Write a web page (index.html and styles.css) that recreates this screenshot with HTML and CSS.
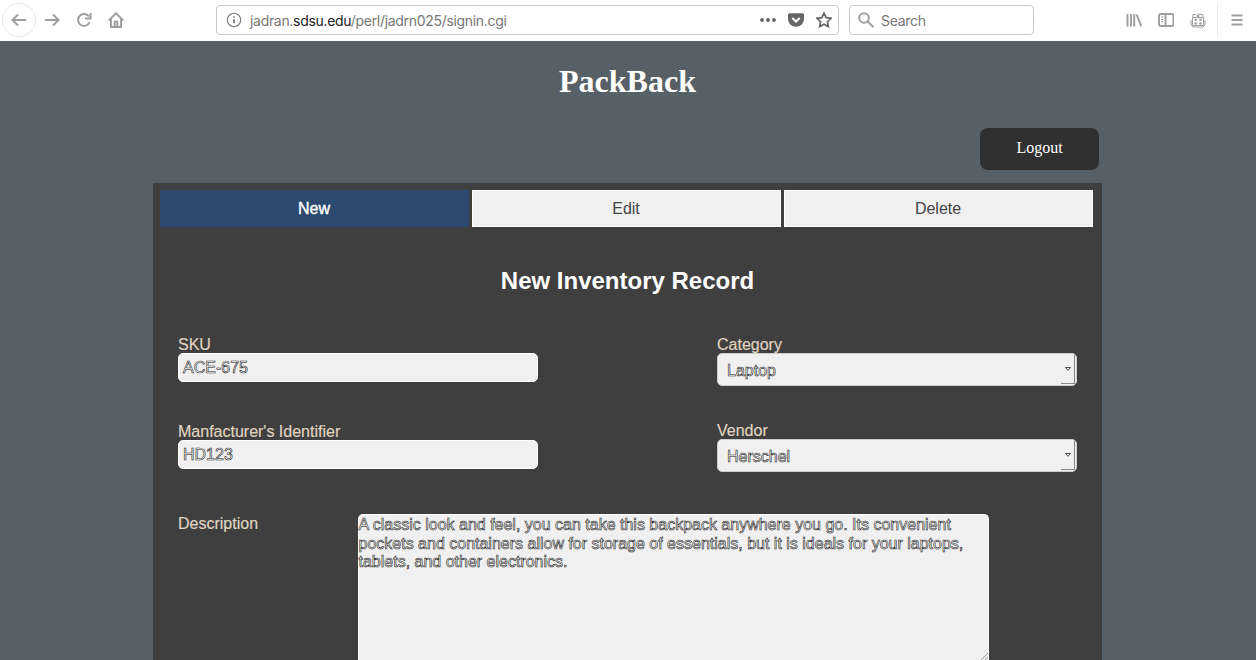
FILE: index.html
```html
<!DOCTYPE html>
<html lang="en">
<head>
<meta charset="utf-8">
<title>PackBack</title>
<link rel="stylesheet" href="styles.css">
</head>
<body>
<header class="toolbar">
  <nav class="nav">
    <span class="back"><svg class="icon" viewBox="0 0 16 16"><path d="M15 8H1.5M7 2.5 1.5 8 7 13.5"/></svg></span>
    <svg class="icon" viewBox="0 0 16 16"><path d="M1 8h13.500M9 2.500 14.500 8 9 13.500"/></svg>
    <svg class="icon" viewBox="0 0 16 16"><path d="M13 4.500A6 6 0 1 0 13.700 10"/><path d="M14.500 1v5.500H9"/></svg>
    <svg class="icon" viewBox="0 0 16 16"><path d="M.8 8.500 8 1.300l7.200 7.200M3 7.500V15h10V7.500"/><path d="M6.700 14.500V9.800h2.600v4.700"/></svg>
  </nav>
  <div class="address">
    <svg class="info" viewBox="0 0 16 16"><circle cx="8" cy="8" r="6.700"/><path class="thick" d="M8 7.300v4M8 4.200v1.600"/></svg>
    <span class="url">jadran.<span class="host">sdsu.edu</span>/perl/jadrn025/signin.cgi</span>
    <div class="actions">
      <svg class="icon dark" viewBox="0 0 16 16"><g class="solid"><circle cx="2" cy="8" r="1.900"/><circle cx="8" cy="8" r="1.900"/><circle cx="14" cy="8" r="1.900"/></g></svg>
      <svg class="icon dark" viewBox="0 0 16 16"><path class="solid" d="M1.500 1.300h13q1.500 0 1.500 1.500V7a8 7.700 0 0 1-16 0V2.800q0-1.500 1.500-1.500z"/><path class="tick" d="m4.300 6 3.700 3.500L11.700 6"/></svg>
      <svg class="icon dark" viewBox="0 0 16 16"><path d="m8 1.200 2.100 4.500 4.900.6-3.600 3.400.9 4.900L8 12.200l-4.300 2.400.9-4.900L1 6.300l4.900-.6z"/></svg>
    </div>
  </div>
  <div class="search">
    <svg class="icon" viewBox="0 0 16 16"><circle cx="6" cy="6" r="4.800"/><path d="m9.600 9.600 6 5.600"/></svg>
    <span>Search</span>
  </div>
  <div class="tools">
    <svg class="icon" viewBox="0 0 16 16"><path d="M1.500 2v12.500M5 2v12.500M8.200 2v12.500M10.700 2.500l4.600 12"/></svg>
    <svg class="icon" viewBox="0 0 16 16"><rect x="1" y="2" width="14.500" height="12" rx="2"/><path d="M7.500 2v12"/><path class="fine" d="M3 5h2.500M3 7.500h2.500M3 9.800h2"/></svg>
    <svg class="icon" viewBox="0 0 16 16"><path class="fine" d="M3 5V2.500h3M8 2l5 .5v3M2.500 5.500h11v8h-11zM1 8v5l2 2h10l2-2V8"/><g class="solid"><circle cx="5.700" cy="7.800" r="1.300"/><circle cx="10.500" cy="7.800" r="1.300"/><circle cx="5.700" cy="11.500" r="1.300"/><circle cx="10.500" cy="11.500" r="1.300"/><circle cx="8" cy="4" r="1.400"/></g></svg>
    <span class="divider"></span>
    <svg class="icon" viewBox="0 0 16 16"><path d="M2.500 3.500h11M2.500 8h11M2.500 12.500h11"/></svg>
  </div>
</header>
<main class="page">
  <h1 class="brand">PackBack</h1>
  <div class="session"><a class="logout">Logout</a></div>
  <section class="panel">
    <div class="tabs">
      <div class="tab active">New</div>
      <div class="tab">Edit</div>
      <div class="tab">Delete</div>
    </div>
    <h2 class="title">New Inventory Record</h2>
    <div class="columns">
      <div class="column left">
        <div class="field"><span class="label">SKU</span><div class="input">ACE-675</div></div>
        <div class="field"><span class="label">Manfacturer's Identifier</span><div class="input">HD123</div></div>
      </div>
      <div class="column right">
        <div class="field"><span class="label">Category</span><div class="select"><span>Laptop</span><span class="arrow"><svg viewBox="0 0 6 4"><path d="M.5.500h5L3 3.300z"/></svg></span></div></div>
        <div class="field"><span class="label">Vendor</span><div class="select"><span>Herschel</span><span class="arrow"><svg viewBox="0 0 6 4"><path d="M.5.500h5L3 3.300z"/></svg></span></div></div>
      </div>
    </div>
    <div class="description">
      <span class="label">Description</span>
      <div class="textarea">A classic look and feel, you can take this backpack anywhere you go. Its convenient<br>pockets and containers allow for storage of essentials, but it is ideals for your laptops,<br>tablets, and other electronics.<svg class="grip" viewBox="0 0 8 8"><path d="M0 8 8 0M4 8l4-4"/></svg></div>
    </div>
  </section>
</main>
</body>
</html>
```
FILE: styles.css
```css
* { box-sizing: border-box; }
body {
  margin: 0;
  height: 660px;
  overflow: hidden;
  display: flex;
  flex-direction: column;
  background: #576066;
  font: 16px/18px "Liberation Sans", Arial, sans-serif;
}

/* Browser toolbar */
.toolbar {
  flex: none;
  height: 41px;
  display: flex;
  align-items: center;
  padding: 0 4px 1px 2px;
  background: #fff;
  color: #777;
  font: 14px/20px Inter, sans-serif;
}
.icon { width: 16px; height: 16px; flex: none; }
.toolbar svg { fill: none; stroke: #a0a0a0; stroke-width: 2; }
.toolbar .fine { stroke-width: 1; }
.toolbar .solid { fill: #a0a0a0; stroke: none; }
.toolbar .dark { stroke: #666; stroke-width: 1.7; }
.toolbar .dark .solid { fill: #666; }
.toolbar .tick { stroke: #fff; stroke-width: 2; }
.nav { display: flex; align-items: center; gap: 16px; width: 214px; }
.back {
  width: 34px; height: 34px;
  margin-right: -8px;
  border: 1px solid #e6e6e6;
  border-radius: 50%;
  display: grid;
  place-items: center;
}
.address, .search {
  height: 30px;
  display: flex;
  align-items: center;
  border: 1px solid #c8c8c8;
  border-radius: 4px;
}
.address { width: 623px; padding: 0 6px 0 9px; }
.toolbar .info { width: 16px; height: 16px; stroke: #777; stroke-width: 1.1; }
.toolbar .thick { stroke-width: 1.700; }
.url { margin-left: 8px; padding-top: 1px; letter-spacing: -.31px; white-space: nowrap; }
.host { color: #222; }
.actions { display: flex; gap: 12px; margin-left: auto; }
.search { width: 185px; margin-left: 10px; padding-left: 8px; gap: 7px; }
.search span { padding-top: 1px; letter-spacing: -.3px; }
.tools { display: flex; align-items: center; gap: 16px; margin-left: auto; margin-right: 7px; }
.divider { width: 1px; height: 34px; margin: 0 -5px 0 -5px; background: #e8e8e8; }

/* Page */
.page {
  flex: 1;
  min-height: 0;
  width: 949px;
  margin: 0 0 0 153px;
  display: flex;
  flex-direction: column;
}
.brand {
  margin: 22px 0 0;
  font: bold 32px/37px "Liberation Serif", "Times New Roman", serif;
  text-align: center;
  color: #fff;
}
.session { display: flex; justify-content: flex-end; padding: 28px 3px 13px; }
.logout {
  width: 119px;
  height: 42px;
  border-radius: 8px;
  background: #303030;
  color: #fff;
  font: 16px/40px "Liberation Serif", "Times New Roman", serif;
  text-align: center;
}
.panel { flex: 1; background: #3f3f3f; padding: 7px 9.500px 0 6.500px; }
.tabs { display: grid; grid-template-columns: repeat(3, 1fr); gap: 3px; height: 37px; }
.tab {
  background: #f0f0f0;
  border: 1px solid #fff;
  color: #444;
  text-align: center;
  line-height: 35px;
}
.tab.active { background: #2c4a70; border-color: #2c4a70; color: #fff; -webkit-text-stroke: .4px #fff; }
.title {
  margin: 40px 0 0 3px;
  font-size: 24px;
  line-height: 28px;
  text-align: center;
  color: #fff;
}
.columns { display: flex; gap: 179px; padding: 41px 0 0 18.500px; height: 219px; }
.column { width: 360px; display: flex; flex-direction: column; }
.left { gap: 41px; }
.right { gap: 36px; }
.label { display: block; height: 17px; line-height: 17px; color: #dfd3c1; -webkit-text-stroke: .2px #dfd3c1; }
.input, .select {
  background: #f0f0f0;
  border: 1px solid #fff;
  border-radius: 5px;
}
.input, .select, .textarea { color: #fff; -webkit-text-stroke: .6px #222; }
.input { height: 29px; padding-left: 4px; line-height: 28px; }
.select { height: 33px; display: flex; justify-content: space-between; padding: 1px 1px 1px 9px; line-height: 31px; border-color: #ccc; }
.arrow {
  width: 14px;
  display: grid;
  place-items: center;
  border-right: 1px solid #888;
  border-bottom: 1px solid #888;
}
.arrow svg { width: 6px; height: 4px; fill: #fff; stroke: #222; stroke-width: .8; }
.description { display: flex; padding-left: 18.500px; }
.description .label { width: 179.500px; padding-top: 1px; }
.textarea {
  position: relative;
  width: 631px;
  height: 147px;
  padding-top: 1px;
  background: #f0f0f0;
  border: 1px solid #fff;
  border-bottom: 0;
  border-radius: 5px 5px 0 0;
  line-height: 18.7px;
  white-space: nowrap;
}
.grip { position: absolute; right: 0; bottom: 0; width: 8px; height: 8px; fill: none; stroke: #999; stroke-width: 1; }
```
